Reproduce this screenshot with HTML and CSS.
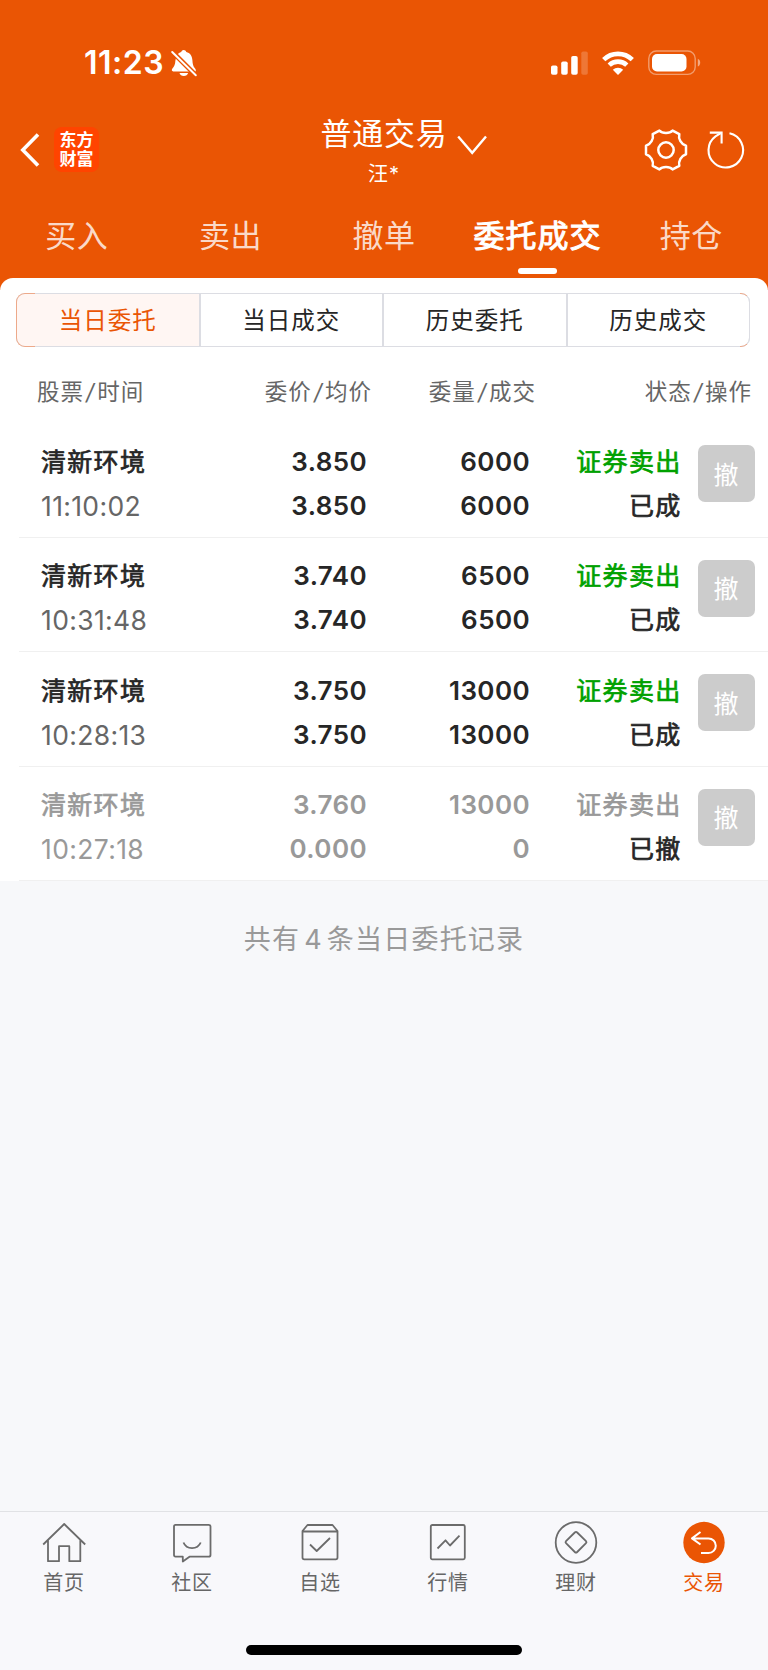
FILE: index.html
```
<!DOCTYPE html>
<html lang="zh-CN">
<head>
    <meta charset="UTF-8">
    <meta name="viewport" content="width=device-width, initial-scale=1.0">
    <title>普通交易</title>
    <link rel="stylesheet" href="styles.css">
</head>
<body>
    <header class="header">
        <div class="status-bar">
            <span class="clock">11:23</span>
            <svg class="bell" width="28" height="28" viewBox="0 0 28 28">
                <path d="M6.600 6.500C8 4.500 9.500 3.400 11.200 3C11.500 1.700 12.500 1 13.700 1s2.300.7 2.600 2c3.700.8 5.900 4 6.100 8.200.2 4 .8 5.800 2.100 7.500 1.200 1.400 1.500 2 1.200 3.800H3.200c-1.500 0-1.800-1.700-.8-2.900 1.800-2.200 2.800-4 3-8.100z" fill="#fff"/>
                <path d="M9.500 24h8.600c-.5 1.700-2.100 3-4.300 3s-3.800-1.300-4.300-3z" fill="#fff"/>
                <path d="M2 2.500L26 26.500" stroke="#ea5504" stroke-width="4.800"/>
                <path d="M2.200 3L25.800 26.200" stroke="#fff" stroke-width="2" stroke-linecap="round"/>
            </svg>
            <svg class="signal" width="38" height="24" viewBox="0 0 38 24" fill="#fff">
                <rect x="0" y="14.500" width="6.500" height="9.200" rx="1.800"/>
                <rect x="10.200" y="10.500" width="6.500" height="13.200" rx="1.800"/>
                <rect x="20.200" y="5" width="6.500" height="18.700" rx="1.800"/>
                <rect x="30.300" y="0.500" width="6.500" height="23.200" rx="1.800" opacity=".2"/>
            </svg>
            <svg class="wifi" width="32" height="24" viewBox="0 0 32 24" fill="none" stroke="#fff" stroke-width="4.600">
                <path d="M1.700 8.700a20.500 20.500 0 0 1 28.600 0"/>
                <path d="M7.200 14.200a12.700 12.700 0 0 1 17.600 0"/>
                <path d="M16 24l-5.200-5.200a7.500 7.500 0 0 1 10.400 0z" fill="#fff" stroke="none"/>
            </svg>
            <svg class="battery" width="53" height="26" viewBox="0 0 53 26">
                <rect x=".8" y="1" width="46.400" height="23.400" rx="7.500" fill="none" stroke="#fff" stroke-width="1.400" opacity=".42"/>
                <rect x="4" y="4" width="34.500" height="17.400" rx="5" fill="#fff"/>
                <path d="M49.800 8.800c3.200 1.300 3.200 6.500 0 7.800z" fill="#fff" opacity=".5"/>
            </svg>
        </div>

        <div class="nav">
            <svg class="back" width="20" height="36" viewBox="0 0 20 36" fill="none" stroke="#fff" stroke-width="3.600">
                <path d="M18 2.500L2.800 18L18 33.500"/>
            </svg>
            <div class="logo">东方<br>财富</div>
            <div class="account">
                <div class="account-type">普通交易</div>
                <div class="account-name">汪*</div>
            </div>
            <svg class="arrow" width="30" height="20" viewBox="0 0 30 20" fill="none" stroke="#fff" stroke-width="2.400">
                <path d="M1.200 1.500L15.200 17.800L29 1.500"/>
            </svg>
            <svg class="gear" width="44" height="44" viewBox="-22 -22 44 44" fill="none" stroke="#fff" stroke-width="2.500" stroke-linejoin="round">
                <path d="M-6.600 -19.400C-3.500 -16.200 3.500 -16.200 6.600 -19.400L13.300 -15.800C12.100 -11.200 15.200 -5.600 20 -4.200L20 4.200C15.200 5.600 12.100 11.200 13.300 15.800L6.600 19.400C3.500 16.200 -3.500 16.200 -6.600 19.400L-13.300 15.800C-12.100 11.200 -15.200 5.600 -20 4.200L-20 -4.200C-15.200 -5.600 -12.100 -11.200 -13.300 -15.800Z"/>
                <circle r="7.700"/>
            </svg>
            <svg class="refresh" width="40" height="40" viewBox="0 0 40 40" fill="none" stroke="#fff" stroke-width="2.100">
                <path d="M23.500 3.300A17.300 17.300 0 1 1 9.500 6.300L15.600 2.600"/>
                <path d="M3.800 2.600H15.600V13.500"/>
            </svg>
        </div>

        <div class="tabs">
            <div class="tab">买入</div>
            <div class="tab">卖出</div>
            <div class="tab">撤单</div>
            <div class="tab active">委托成交</div>
            <div class="tab">持仓</div>
        </div>
    </header>

    <main class="sheet">
        <div class="segments">
            <div class="segment active">当日委托</div>
            <div class="segment">当日成交</div>
            <div class="segment">历史委托</div>
            <div class="segment">历史成交</div>
        </div>

        <div class="list-head">
            <span>股票<i>/</i>时间</span>
            <span>委价<i>/</i>均价</span>
            <span>委量<i>/</i>成交</span>
            <span>状态<i>/</i>操作</span>
        </div>

        <div class="order">
            <div class="stock"><b>清新环境</b><span class="time">11:10:02</span></div>
            <div class="num"><span>3.850</span><span>3.850</span></div>
            <div class="num"><span>6000</span><span>6000</span></div>
            <div class="state"><span class="side">证券卖出</span><span>已成</span></div>
            <button class="cancel">撤</button>
        </div>
        <div class="order">
            <div class="stock"><b>清新环境</b><span class="time">10:31:48</span></div>
            <div class="num"><span>3.740</span><span>3.740</span></div>
            <div class="num"><span>6500</span><span>6500</span></div>
            <div class="state"><span class="side">证券卖出</span><span>已成</span></div>
            <button class="cancel">撤</button>
        </div>
        <div class="order">
            <div class="stock"><b>清新环境</b><span class="time">10:28:13</span></div>
            <div class="num"><span>3.750</span><span>3.750</span></div>
            <div class="num"><span>13000</span><span>13000</span></div>
            <div class="state"><span class="side">证券卖出</span><span>已成</span></div>
            <button class="cancel">撤</button>
        </div>
        <div class="order canceled">
            <div class="stock"><b>清新环境</b><span class="time">10:27:18</span></div>
            <div class="num"><span>3.760</span><span>0.000</span></div>
            <div class="num"><span>13000</span><span>0</span></div>
            <div class="state"><span class="side">证券卖出</span><span>已撤</span></div>
            <button class="cancel">撤</button>
        </div>
    </main>

    <p class="summary">共有<span class="count">4</span>条当日委托记录</p>

    <footer class="footer">
        <nav class="tab-bar">
            <div class="item">
                <svg width="44" height="44" viewBox="0 0 44 44">
                    <path d="M1.200 22.500L22.200 2L43.200 22.500M6 18.500V39.200H17V24.200H27.300V39.200H38.300V18.500"/>
                </svg>
                <span>首页</span>
            </div>
            <div class="item">
                <svg width="44" height="44" viewBox="0 0 44 44">
                    <path d="M5.500 2.800H38.700Q40.500 2.800 40.500 4.500V33Q40.500 34.700 38.700 34.700H19.500L12.800 39.500V34.700H5.500Q4 34.700 4 33V4.500Q4 2.800 5.500 2.800Z"/>
                    <path d="M13.500 20.500C16.500 28 27.500 28 30.700 20.500"/>
                </svg>
                <span>社区</span>
            </div>
            <div class="item">
                <svg width="44" height="44" viewBox="0 0 44 44">
                    <path d="M4.500 9L9.500 3H34.500L39.500 9V35.500Q39.500 37.300 37.700 37.300H6.300Q4.500 37.300 4.500 35.500ZM4.500 9.500H39.500"/>
                    <path d="M12 22.500L18.700 29L32 16"/>
                </svg>
                <span>自选</span>
            </div>
            <div class="item">
                <svg width="44" height="44" viewBox="0 0 44 44">
                    <rect x="4.800" y="3" width="34" height="34.300" rx="1.500"/>
                    <path d="M11.500 26.500L19.500 18.300L24 23.500L33.500 13.700"/>
                </svg>
                <span>行情</span>
            </div>
            <div class="item">
                <svg width="44" height="44" viewBox="0 0 44 44">
                    <circle cx="22" cy="20.500" r="20.300"/>
                    <path d="M20.800 10.500Q22 9.300 23.200 10.500L32 19.200Q33 20.200 32 21.200L23.200 30Q22 31.200 20.800 30L12 21.200Q11 20.200 12 19.200Z"/>
                </svg>
                <span>理财</span>
            </div>
            <div class="item active">
                <svg width="44" height="44" viewBox="0 0 44 44">
                    <circle class="disc" cx="22" cy="20.500" r="20.700"/>
                    <path d="M18.500 10L10 16.400L18.500 22.500M10.500 16.400H26.500A7 7 0 0 1 26.500 31H19"/>
                </svg>
                <span>交易</span>
            </div>
        </nav>
        <div class="home-indicator"></div>
    </footer>
</body>
</html>
```
FILE: styles.css
```
* { box-sizing: border-box; }
body {
    margin: 0;
    width: 768px;
    height: 1670px;
    display: flex;
    flex-direction: column;
    background: #f7f8fa;
    color: #262626;
    font-family: Inter, "Noto Sans CJK SC", sans-serif;
    overflow: hidden;
}
svg { display: block; flex: none; overflow: visible; }

/* header */
.header { height: 290px; background: #ea5504; color: #fff; flex: none; }
.status-bar { display: flex; align-items: center; height: 78px; padding: 47px 0 0 84px; }
.clock { width: 86px; font-size: 32px; font-weight: 600; line-height: 32px; letter-spacing: .500px; white-space: nowrap; }
.signal { margin-left: 353px; }
.wifi { margin-left: 13px; }
.battery { margin-left: 14px; }
.nav { display: flex; align-items: center; height: 110px; padding: 40px 22px 0 20px; }
.back { margin-top: -7px; }
.logo {
    width: 45px; height: 45px;
    margin: -7px 0 0 14px;
    padding-top: 4px;
    background: #ff4400;
    border-radius: 8px;
    font-size: 17px; font-weight: 700;
    line-height: 19px;
    text-align: center;
}
.account { width: 130px; margin: 2px 0 0 220px; text-align: center; }
.account-type { font-size: 31px; line-height: 40px; letter-spacing: .700px; white-space: nowrap; }
.account-name { font-size: 20px; line-height: 40px; letter-spacing: 1px; }
.arrow { margin: -16px 0 0 8px; }
.gear { margin: -7px 0 0 157px; }
.refresh { margin: -6px 0 0 18px; }
.tabs { display: flex; height: 90px; }
.tab {
    position: relative;
    flex: 1;
    font-size: 31px; line-height: 95px;
    letter-spacing: .500px;
    text-align: center;
    color: rgba(255, 255, 255, .8);
}
.tab.active { color: #fff; letter-spacing: 1px; -webkit-text-stroke: 1px #fff; }
.tab.active::after {
    content: "";
    position: absolute;
    left: 57px; top: 80px;
    width: 39px; height: 6px;
    border-radius: 3px;
    background: #fff;
}

/* order list */
.sheet { margin-top: -12px; padding-top: 15px; background: #fff; border-radius: 13px 13px 0 0; flex: none; }
.segments {
    position: relative;
    display: flex;
    width: 734px; height: 54px;
    margin-left: 16px;
    border: 1px solid #dcdde3;
    border-radius: 9px;
}
/* tinted ends of the control */
.segments::before, .segments::after {
    content: "";
    position: absolute;
    top: -1px; bottom: -1px;
    width: 18px;
    border: 1px solid #eda98a;
}
.segments::before { left: -1px; border-right: none; border-radius: 9px 0 0 9px; }
.segments::after { right: -1px; width: 9px; border-left: none; border-right-color: #dcdde3; border-radius: 0 9px 9px 0; }
.segment {
    flex: 1;
    border-left: 2px solid #dcdde3;
    font-size: 23.500px; line-height: 53px;
    letter-spacing: 1px;
    text-align: center;
}
.segment.active { border-left: none; border-radius: 8px 0 0 8px; background: #fff6f3; color: #ea5504; }
.list-head {
    display: grid;
    grid-template-columns: 190px 145px 164px 216px;
    height: 76px;
    padding-left: 37px;
    color: #666;
    font-size: 22.500px; line-height: 89px;
    letter-spacing: 1px;
    text-align: right;
}
.list-head span:first-child { text-align: left; }
.list-head i { margin: 0 2px; }
.order {
    display: grid;
    grid-template-columns: 190px 136px 163px 151.500px 75px;
    height: 114.600px;
    margin-left: 19px;
    padding: 16.500px 0 0 22px;
    border-bottom: 1px solid #f0f0f0;
    font-size: 25px;
    letter-spacing: 1.300px;
    line-height: 44px;
    text-align: right;
}
.order span, .order b { display: block; height: 44px; }
.order b { font-weight: 400; }
.order b, .state { -webkit-text-stroke: .700px; }
.stock { text-align: left; }
.time { color: #666; font-size: 26.500px; letter-spacing: .350px; }
.num { font-size: 26px; font-weight: 600; letter-spacing: .400px; }
.side { color: #00a100; }
.cancel {
    width: 57px; height: 57px;
    margin: 5.500px 0 0 16px;
    padding: 0 0 2px;
    border: none;
    border-radius: 7px;
    background: #ccc;
    color: #fff;
    font: 25px "Noto Sans CJK SC", sans-serif;
}
.canceled .stock, .canceled .time, .canceled .num, .canceled .side { color: #999; }

.summary {
    margin: 39px 0 0;
    color: #999;
    font-size: 27px; line-height: 40px;
    letter-spacing: 1.200px;
    text-align: center;
}
.count { margin: 0 4px; }

/* bottom bar */
.footer { height: 159px; margin-top: auto; border-top: 1px solid #e1e2e5; background: #f8f8fb; }
.tab-bar { display: flex; height: 133px; padding-top: 9.500px; }
.item {
    display: flex;
    flex: 1;
    flex-direction: column;
    align-items: center;
    color: #666;
    font-size: 20px; line-height: 30px;
    letter-spacing: .700px;
}
.item svg { fill: none; stroke: #6b6b6b; stroke-width: 1.800; stroke-linejoin: round; }
.item span { margin-top: 2px; }
.item.active { color: #ea5504; }
.item.active svg { stroke: #fff; stroke-width: 2; }
.item .disc { fill: #ea5504; stroke: none; }
.home-indicator { width: 276px; height: 10px; margin: 0 auto; border-radius: 5px; background: #000; }
```
